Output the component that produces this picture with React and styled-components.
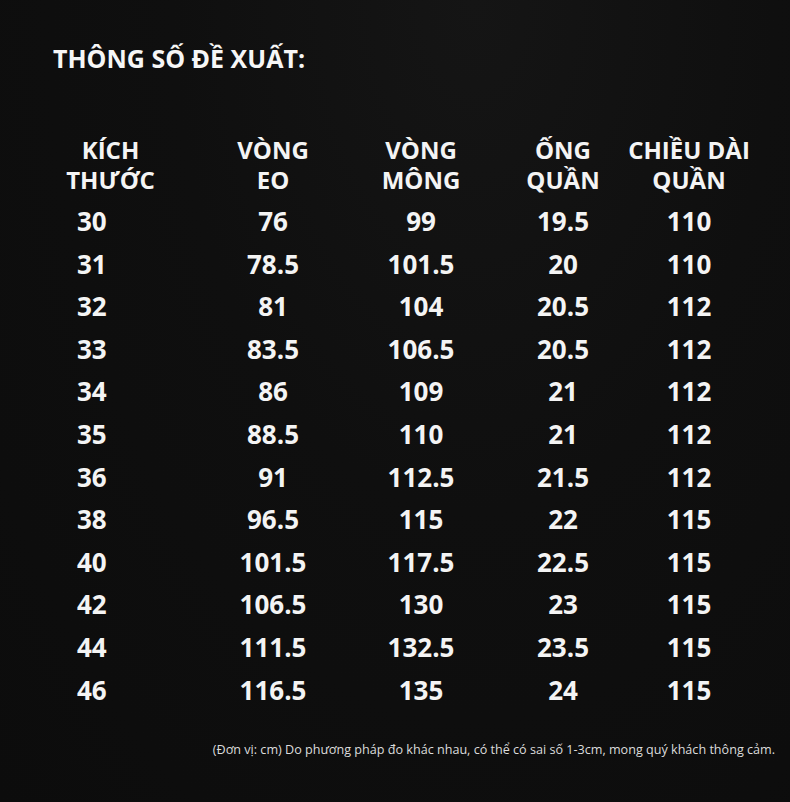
import React from 'react';
import styled, { createGlobalStyle } from 'styled-components';

const GlobalStyle = createGlobalStyle`
  html, body { margin: 0; padding: 0; background: #0e0e0e; }
  body { font-family: "Open Sans", "Noto Sans", sans-serif; }
`;

// --- layout ---
const Page = styled.div`
  width: 790px;
  height: 802px;
  box-sizing: border-box;
  padding: 40px 0 0 53px;
  background: radial-gradient(ellipse at 60% 0%, #151515 0%, #0f0f0f 45%, #0c0c0c 100%);
  color: #f4f4f4;
  overflow: hidden;
  display: flex;
  flex-direction: column;
`;

const Title = styled.h1`
  margin: 0;
  font-size: 25px;
  font-weight: 700;
  line-height: 36px;
  letter-spacing: 0;
  color: #f6f6f6;
`;

const Table = styled.div`
  margin-top: 59px;
  margin-left: -23px;
  display: grid;
  grid-template-columns: 161px 164px 132px 152px 100px;
`;

const HeadCell = styled.div`
  display: flex;
  flex-direction: column;
  align-items: center;
  font-size: 24px;
  font-weight: 700;
  line-height: 30px;
  white-space: nowrap;
  margin-bottom: 5px;
`;

const Cell = styled.div`
  display: flex;
  justify-content: ${p => (p.$first ? 'flex-start' : 'center')};
  padding-left: ${p => (p.$first ? '47px' : '0')};
  font-size: 26px;
  font-weight: 700;
  line-height: 42.6px;
  white-space: nowrap;
`;

const Note = styled.p`
  margin: 31px 15px 0 0;
  align-self: flex-end;
  font-size: 12.6px;
  line-height: 16px;
  color: #dcdcdc;
  white-space: nowrap;
`;

const headers = [
  ['KÍCH', 'THƯỚC'],
  ['VÒNG', 'EO'],
  ['VÒNG', 'MÔNG'],
  ['ỐNG', 'QUẦN'],
  ['CHIỀU DÀI', 'QUẦN'],
];

const rows = [
  ['30', '76', '99', '19.5', '110'],
  ['31', '78.5', '101.5', '20', '110'],
  ['32', '81', '104', '20.5', '112'],
  ['33', '83.5', '106.5', '20.5', '112'],
  ['34', '86', '109', '21', '112'],
  ['35', '88.5', '110', '21', '112'],
  ['36', '91', '112.5', '21.5', '112'],
  ['38', '96.5', '115', '22', '115'],
  ['40', '101.5', '117.5', '22.5', '115'],
  ['42', '106.5', '130', '23', '115'],
  ['44', '111.5', '132.5', '23.5', '115'],
  ['46', '116.5', '135', '24', '115'],
];

const App = () => (
  <>
    <GlobalStyle />
    <Page>
      <Title>THÔNG SỐ ĐỀ XUẤT:</Title>
      <Table>
        {headers.map((h, i) => (
          <HeadCell key={'h' + i}>
            <span>{h[0]}</span>
            <span>{h[1]}</span>
          </HeadCell>
        ))}
        {rows.map((r, ri) =>
          r.map((v, ci) => (
            <Cell key={ri + '-' + ci} $first={ci === 0}>{v}</Cell>
          ))
        )}
      </Table>
      <Note>(Đơn vị: cm) Do phương pháp đo khác nhau, có thể có sai số 1-3cm, mong quý khách thông cảm.</Note>
    </Page>
  </>
);

export default App;
